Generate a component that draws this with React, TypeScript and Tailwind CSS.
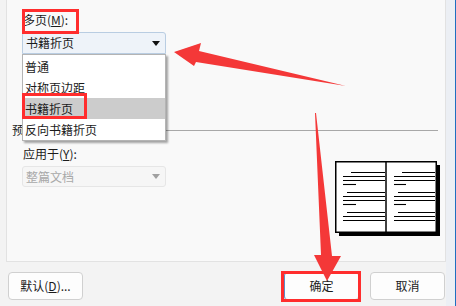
import React from "react";

const options = ["普通", "对称页边距", "书籍折页", "反向书籍折页"];

const Caret = ({ color }: { color: string }) => (
  <svg width="8" height="5" viewBox="0 0 8 5">
    <path d="M0 0h8L4 5z" fill={color} />
  </svg>
);

// 书本预览缩略图
const BookPreview = () => {
  const left = [
    [172, 8, 42],
    [176, 0, 42],
    [180, 0, 42],
    [184, 0, 13],
    [192, 4, 42],
    [196, 0, 42],
    [200, 0, 42],
    [204, 0, 13],
    [212, 4, 42],
    [216, 0, 42],
    [220, 0, 42],
  ];
  return (
    <svg width="106" height="76" viewBox="0 0 106 76">
      <rect x="4" y="4" width="101" height="71" fill="#000" />
      <rect x="0.75" y="0.75" width="100.5" height="70.5" fill="#fff" stroke="#000" strokeWidth="1.5" />
      <line x1="51" y1="0.75" x2="51" y2="71" stroke="#000" strokeWidth="1.5" />
      {left.map(([y, ind, len], i) => (
        <g key={i} stroke="#000" strokeWidth="1.1">
          <line x1={8 + ind} y1={y - 160.5} x2={8 + len} y2={y - 160.5} />
          <line x1={59 + ind} y1={y - 160.5} x2={59 + len - 1} y2={y - 160.5} />
        </g>
      ))}
    </svg>
  );
};

const Button = ({ children, className = "" }: { children: React.ReactNode; className?: string }) => (
  <button
    className={`flex h-[28px] w-[75px] items-center justify-center rounded-[4px] border border-[#d0d0d0] bg-[#fdfdfd] text-[12px] leading-[16px] text-[#1b1b1b] ${className}`}
  >
    {children}
  </button>
);

export default function App() {
  return (
    <div className="relative flex h-[306px] w-[456px] overflow-hidden bg-[#f3f3f3] font-['Noto_Sans_CJK_SC',sans-serif] text-[12px] text-[#1b1b1b]">
      <div className="flex w-[446px] flex-col">
        {/* 页面设置面板 */}
        <div className="relative ml-[6px] h-[262px] border-x border-b border-[#e2e2e2] bg-[#f9f9f9]">
          <div className="mt-[-14px] h-[16px] pl-[6px] leading-[16px]">页码范围</div>

          <div className="pl-[15px]">
            <div className="mt-[10px] h-[16px] pl-[1px] leading-[16px]">
              多页(<span className="underline">M</span>):
            </div>
            <div className="mt-[4px] flex h-[22px] w-[144px] items-center justify-between rounded-t-[3px] border border-[#b9cde2] bg-[#eef3f9] pl-[3px] pr-[5px] leading-[16px]">
              <span>书籍折页</span>
              <Caret color="#111" />
            </div>
          </div>

          {/* 预览 */}
          <div className="mt-[68px] flex h-[16px] items-center pl-[5px] pr-[7px] leading-[16px]">
            <span>预览</span>
            <div className="ml-[4px] h-px flex-1 bg-[#a8a8a8]" />
          </div>

          <div className="flex items-start pl-[15px]">
            <div className="w-[144px]">
              <div className="mt-[8px] h-[16px] pl-[1px] leading-[16px]">
                应用于(<span className="underline">Y</span>):
              </div>
              <div className="mt-[4px] flex h-[21px] items-center justify-between rounded-[3px] border border-[#e6e6e6] bg-[#f6f6f6] pl-[3px] pr-[5px] leading-[16px] text-[#a8a8a8]">
                <span>整篇文档</span>
                <Caret color="#a0a0a0" />
              </div>
            </div>
            <div className="ml-auto mr-[4px] mt-[23px]">
              <BookPreview />
            </div>
          </div>

          {/* 下拉列表 */}
          <div className="absolute left-[15px] top-[54px] w-[144px] border border-[#b4b4b4] bg-white pt-px shadow-[2px_2px_2px_rgba(0,0,0,0.35)]">
            {options.map((o) => (
              <div
                key={o}
                className={`h-[21px] pl-[2px] leading-[21px] ${o === "书籍折页" ? "bg-[#cccccc]" : ""}`}
              >
                {o}
              </div>
            ))}
          </div>
        </div>

        <div className="flex pt-[10px] pl-[8px]">
          <Button>
            默认(<span className="underline">D</span>)...
          </Button>
          <Button className="ml-auto border-[#b7c9dc] border-l-[#5b8dc4]">确定</Button>
          <Button className="ml-[11px] mr-px">取消</Button>
        </div>
      </div>

      <div className="w-[9px] bg-[#eceff4]" />
      <div className="w-px bg-[#1f6fc0]" />

      {/* 标注 */}
      <div className="absolute left-[22px] top-[9px] h-[25px] w-[57px] border-[3px] border-[#ff2d2d]" />
      <div className="absolute left-[22px] top-[93px] h-[26px] w-[65px] border-[3px] border-[#ff2d2d]" />
      <div className="absolute left-[281px] top-[271px] h-[31px] w-[80px] border-[3px] border-[#ff2d2d]" />
      <svg className="pointer-events-none absolute inset-0" width="456" height="306" viewBox="0 0 456 306">
        <polygon points="174,52 201,43 199,51 346,86 196,62 194,66" fill="#f43838" />
        <polygon points="315,113 316,113 332,256 341,256 327,281 314,255 321,255" fill="#f43838" />
      </svg>
    </div>
  );
}
